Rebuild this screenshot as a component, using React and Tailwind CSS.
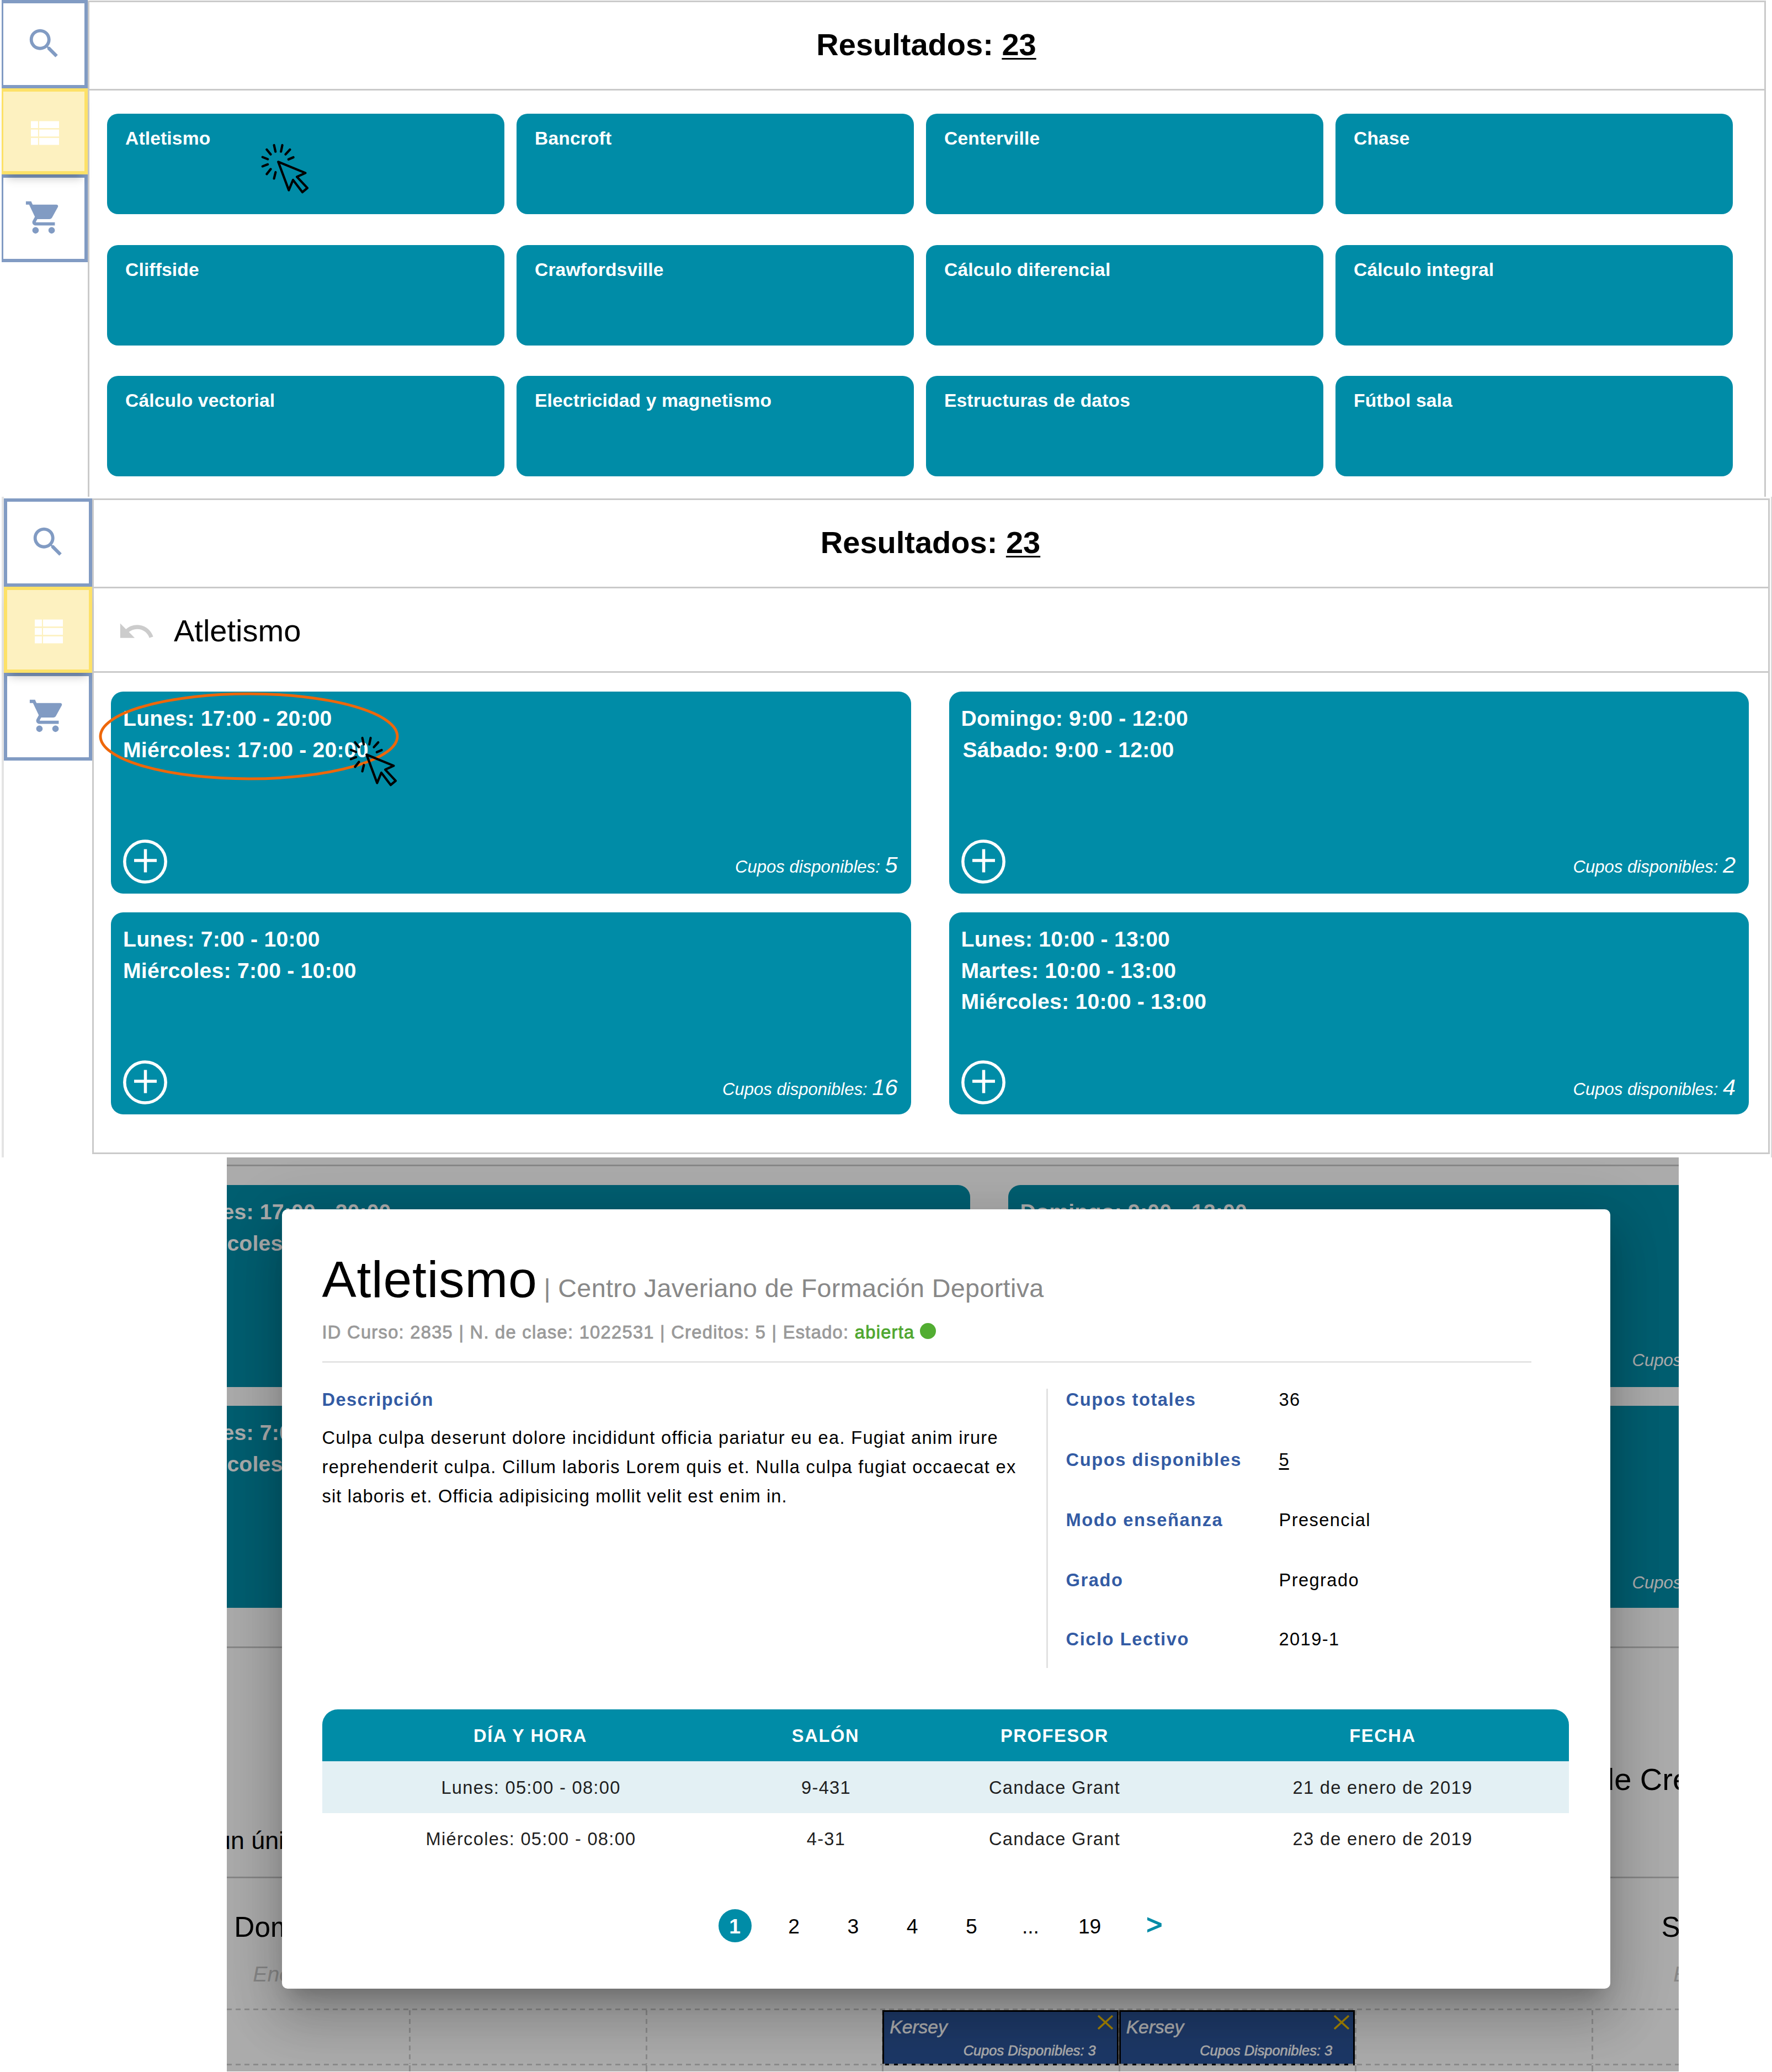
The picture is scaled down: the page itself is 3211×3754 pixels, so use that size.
import React from "react";

const subjects = [
  "Atletismo",
  "Bancroft",
  "Centerville",
  "Chase",
  "Cliffside",
  "Crawfordsville",
  "Cálculo diferencial",
  "Cálculo integral",
  "Cálculo vectorial",
  "Electricidad y magnetismo",
  "Estructuras de datos",
  "Fútbol sala",
];

const schedules = [
  { lines: ["Lunes: 17:00 - 20:00", "Miércoles: 17:00 - 20:00"], seats: 5 },
  { lines: ["Domingo: 9:00 - 12:00", "Sábado: 9:00 - 12:00"], seats: 2 },
  { lines: ["Lunes: 7:00 - 10:00", "Miércoles: 7:00 - 10:00"], seats: 16 },
  {
    lines: [
      "Lunes: 10:00 - 13:00",
      "Martes: 10:00 - 13:00",
      "Miércoles: 10:00 - 13:00",
    ],
    seats: 4,
  },
];

function Icon({ d, className }) {
  return (
    <svg viewBox="0 0 24 24" className={className} fill="currentColor">
      <path d={d} />
    </svg>
  );
}

const SEARCH =
  "M15.5 14h-.79l-.28-.27C15.41 12.59 16 11.11 16 9.5 16 5.91 13.09 3 9.5 3S3 5.91 3 9.5 5.91 16 9.5 16c1.61 0 3.09-.59 4.23-1.57l.27.28v.79l5 4.99L20.49 19l-4.99-5zm-6 0C7.01 14 5 11.99 5 9.5S7.01 5 9.5 5 14 7.01 14 9.5 11.99 14 9.5 14z";
const LIST =
  "M4 4.8h4.3v4.2H4zM9 4.8h12v4.2H9zM4 9.9h4.3v4.2H4zM9 9.9h12v4.2H9zM4 15h4.3v4.2H4zM9 15h12v4.2H9z";
const CART =
  "M7 18c-1.1 0-1.99.9-1.99 2S5.9 22 7 22s2-.9 2-2-.9-2-2-2zM1 2v2h2l3.6 7.59-1.35 2.45c-.16.28-.25.61-.25.96 0 1.1.9 2 2 2h12v-2H7.42c-.14 0-.25-.11-.25-.25l.03-.12.9-1.63h7.45c.75 0 1.41-.41 1.75-1.03l3.58-6.49c.08-.14.12-.31.12-.48 0-.55-.45-1-1-1H5.21l-.94-2H1zm16 16c-1.1 0-1.99.9-1.99 2s.89 2 1.99 2 2-.9 2-2-.9-2-2-2z";
const UNDO =
  "M12.5 8c-2.65 0-5.05.99-6.9 2.6L2 7v9h9l-3.62-3.62c1.39-1.16 3.16-1.88 5.12-1.88 3.54 0 6.55 2.31 7.6 5.5l2.37-.78C21.08 11.03 17.15 8 12.5 8z";

function SideNav({ narrow }) {
  return (
    <nav className={narrow ? "w-[156px] shrink-0" : "w-[160px] shrink-0"}>
      <div
        className={`flex h-[160px] items-center justify-center border-[6px] border-[#819bc3] text-[#819bc3] ${narrow ? "border-l-[3px]" : ""}`}
      >
        <Icon d={SEARCH} className="mb-[3px] size-[70px]" />
      </div>
      <div
        className={`relative z-10 flex h-[156px] items-center justify-center border-[6px] border-[#fde167] bg-[#fdf1c0] text-white shadow-[0_16px_16px_-10px_rgba(0,0,0,0.25)] ${narrow ? "border-l-[3px]" : ""}`}
      >
        <Icon d={LIST} className="mt-[5px] size-[72px]" />
      </div>
      <div
        className={`flex h-[159px] items-center justify-center border-[6px] border-[#819bc3] text-[#819bc3] ${narrow ? "border-l-[3px]" : ""}`}
      >
        <Icon d={CART} className="mb-[3px] mr-[2px] size-[70px]" />
      </div>
    </nav>
  );
}

function ResultsHeader() {
  return (
    <header className="flex h-[160px] items-center justify-center border-b-[3px] border-[#cacaca] pb-[3px] pr-[2px] text-[56px] font-bold leading-[60px] text-black">
      <h1 className="whitespace-pre">
        Resultados:{" "}
        <span className="underline decoration-[3px] underline-offset-[5px]">
          23
        </span>
      </h1>
    </header>
  );
}

function ClickCursor({ className }) {
  return (
    <svg
      viewBox="470 256 94 98"
      className={className}
      fill="none"
      stroke="#000"
      strokeLinecap="round"
      strokeLinejoin="round"
      strokeWidth="4.2"
    >
      <path d="M497.6 263l2.6 11.7M512.6 263l-2.4 11.7M484.4 271l7.1 8.7M526.4 271l-7.9 8.7M476.8 284.6l9.4 3.8M532.6 285l-8.8 3.8M476.8 301.4l9.4-3.6M484.4 315.4l7.1-9M497.6 323.4l2.8-11.4" />
      <path d="M505.2 293.2L554.4 313.4 539 320.4 558 340.6 549 348.2 532 326 524.3 344.6z" />
    </svg>
  );
}

function AddIcon() {
  return (
    <svg
      viewBox="0 0 82 80"
      className="h-[80px] w-[82px]"
      fill="none"
      stroke="#fff"
      strokeWidth="5.5"
    >
      <ellipse cx="40" cy="40" rx="37.2" ry="37" />
      <path d="M40.5 17.5v42M20 38h41" />
    </svg>
  );
}

function ScheduleGrid() {
  return (
    <div className="grid w-[2968px] grid-cols-2 gap-x-[69px] gap-y-[34px] text-white">
      {schedules.map((s, i) => (
        <article
          key={i}
          className="flex h-[366px] flex-col justify-between rounded-[22px] bg-[#008ca7] pb-[18px] pl-[22px] pr-[24px] pt-[21px]"
        >
          <div className="text-[39.2px] font-bold leading-[56.5px] tracking-[0.2px]">
            {s.lines.map((l) => (
              <p key={l} className={l.startsWith("Sábado") ? "pl-[3px]" : ""}>
                {l}
              </p>
            ))}
          </div>
          <div className="flex items-end justify-between">
            <AddIcon />
            <p
              className={`text-[41.5px] italic leading-[56px] ${i < 2 ? "mb-[6px]" : "mb-[3px]"}`}
            >
              <span className="text-[31.1px] leading-none">
                Cupos disponibles:{" "}
              </span>
              {s.seats}
            </p>
          </div>
        </article>
      ))}
    </div>
  );
}

function SubjectsPanel() {
  return (
    <section className="flex h-[900px] overflow-hidden pl-[3px]">
      <SideNav narrow />
      <div className="mt-px w-[3041px] border-x-[3px] border-t-[3px] border-[#cacaca]">
        <ResultsHeader />
        <div className="mt-[42px] grid grid-cols-4 gap-x-[22px] gap-y-[55.5px] pl-[32px] pr-[57px]">
          {subjects.map((name, i) => (
            <div
              key={name}
              className="relative h-[182px] rounded-[20px] bg-[#008ca7] pl-[33px] pt-[25px] text-[33.6px] font-bold leading-[40px] tracking-[0.15px] text-white"
            >
              {name}
              {i === 0 && (
                <ClickCursor className="absolute left-[275px] top-[50px] h-[98px] w-[94px]" />
              )}
            </div>
          ))}
        </div>
      </div>
    </section>
  );
}

function SchedulePanel() {
  return (
    <section className="relative flex h-[1197px] pt-[3px]">
      <div className="-mt-[3px] w-[7px] shrink-0 border-r-[4px] border-[#e4e4e4]" />
      <SideNav />
      <div className="h-[1188px] w-[3040px] shrink-0 border-[3px] border-[#cacaca]">
        <ResultsHeader />
        <div className="flex h-[153px] items-center gap-[33px] border-b-[3px] border-[#cacaca] pl-[42px] pt-[3px] text-[56px] leading-[60px]">
          <Icon d={UNDO} className="mt-[2px] size-[70px] text-[#cccccc]" />
          <h2>Atletismo</h2>
        </div>
        <div className="pl-[31px] pt-[34px]">
          <ScheduleGrid />
        </div>
      </div>
      <div className="-mt-[3px] ml-[2px] w-[2px] shrink-0 bg-[#dcdcdc]" />
      <svg
        viewBox="0 0 548 164"
        className="absolute left-[177px] top-[352px] h-[164px] w-[548px]"
        fill="none"
        stroke="#ee670a"
        strokeWidth="5"
      >
        <ellipse cx="274" cy="82" rx="269" ry="77" />
      </svg>
      <ClickCursor className="absolute left-[629px] top-[430px] h-[98px] w-[94px]" />
    </section>
  );
}

function DashedRow() {
  return (
    <div className="h-[3px] shrink-0 bg-[repeating-linear-gradient(90deg,#cfcfcf_0_9px,transparent_9px_16px)]" />
  );
}

function CalendarEvent() {
  return (
    <div className="-mb-[3px] ml-[1px] flex h-[100px] flex-col justify-between border-[3px] border-black bg-[#2c5499] pb-[8px] pl-[10px] pr-[7px] pt-[6px] italic text-white">
      <div className="flex justify-between">
        <span className="pt-[2px] text-[33.6px] leading-[40px] [-webkit-text-stroke:0.5px]">
          Kersey
        </span>
        <svg
          viewBox="0 0 28 26"
          className="h-[26px] w-[28px]"
          stroke="#f5c400"
          strokeWidth="3.5"
        >
          <path d="M1 1l26 24M27 1L1 25" />
        </svg>
      </div>
      <span className="-mt-[2px] mb-[2px] pr-[31px] text-right text-[25.4px] leading-[28px] [-webkit-text-stroke:0.6px]">
        Cupos Disponibles: 3
      </span>
    </div>
  );
}

function CalendarBackdrop() {
  return (
    <div className="flex h-full w-full flex-col bg-white">
      <div className="h-[16px] shrink-0 border-b-[3px] border-[#cacaca]" />
      <div className="-ml-[103px] mt-[34px] h-[836px] shrink-0">
        <ScheduleGrid />
      </div>
      <div className="flex h-[420px] shrink-0 border-y-[3px] border-[#cacaca] text-black">
        <p className="-ml-[18px] w-[2501px] shrink-0 whitespace-nowrap pt-[318px] text-[44.8px] leading-[60px]">
          un único
        </p>
        <p className="whitespace-nowrap pt-[208px] text-[56px] leading-[60px]">
          de Creditos
        </p>
      </div>
      <div className="-ml-[98px] flex h-[236px] w-[2999px] shrink-0 justify-between pt-[59px] text-center">
        <div className="w-[428px]">
          <p className="text-[51.3px] leading-[60px]">Domingo</p>
          <p className="mt-[30px] text-[39.2px] italic leading-[50px] text-[#c8c8c8]">
            Enero 6
          </p>
        </div>
        <div className="w-[428px]">
          <p className="pl-[2px] text-[51.3px] leading-[60px]">Sábado</p>
          <p className="mt-[30px] pl-[6px] text-[39.2px] italic leading-[50px] text-[#c8c8c8]">
            Enero 5
          </p>
        </div>
      </div>
      <DashedRow />
      <div className="-ml-[98px] grid h-[97px] w-[2999px] shrink-0 grid-cols-7">
        {[0, 1, 2, 3, 4, 5, 6].map((c) => (
          <div
            key={c}
            className="flex bg-[repeating-linear-gradient(180deg,#cfcfcf_0_9px,transparent_9px_16px)] bg-[length:3px_100%] bg-no-repeat"
          >
            {(c === 3 || c === 4) && (
              <div className="w-full">
                <CalendarEvent />
              </div>
            )}
          </div>
        ))}
      </div>
      <DashedRow />
      <div className="-ml-[98px] grid w-[2999px] grow grid-cols-7">
        {[0, 1, 2, 3, 4, 5, 6].map((c) => (
          <div key={c} className="border-l-[3px] border-[#cfcfcf]" />
        ))}
      </div>
    </div>
  );
}

const facts = [
  ["Cupos totales", "36"],
  ["Cupos disponibles", "5"],
  ["Modo enseñanza", "Presencial"],
  ["Grado", "Pregrado"],
  ["Ciclo Lectivo", "2019-1"],
];

const rows = [
  ["Lunes: 05:00 - 08:00", "9-431", "Candace Grant", "21 de enero de 2019"],
  ["Miércoles: 05:00 - 08:00", "4-31", "Candace Grant", "23 de enero de 2019"],
];

function CourseDialog() {
  return (
    <div className="h-[1412px] w-[2407px] rounded-[10px] bg-white pl-[72.5px] pt-[76.5px] text-[32.67px] leading-[40px] tracking-[1.28px] shadow-[0_26px_35px_-16px_rgba(0,0,0,0.2),0_56px_89px_7px_rgba(0,0,0,0.14),0_21px_107px_19px_rgba(0,0,0,0.12)]">
      <h2 className="whitespace-nowrap text-[93.3px] leading-[100px] tracking-[0.7px] text-black">
        Atletismo
        <span className="pl-[12px] text-[46.7px] leading-none tracking-[0.35px] text-[#888888]">
          | Centro Javeriano de Formación Deportiva
        </span>
      </h2>
      <p className="mt-[26px] flex items-center whitespace-pre text-[#9a9a9a] [-webkit-text-stroke:0.9px]">
        ID Curso: 2835 | N. de clase: 1022531 | Creditos: 5 | Estado:{" "}
        <span className="text-[#4fa72f]">abierta</span>
        <span className="mb-[5px] ml-[9px] size-[29px] rounded-full bg-[#52ad32]" />
      </p>
      <div className="mt-[32px] h-[3px] w-[2191px] bg-[#e4e4e4]" />
      <div className="mt-[47px] flex h-[506px]">
        <div className="w-[1312px] shrink-0">
          <h3 className="font-bold tracking-[1.4px] text-[#335ba4]">
            Descripción
          </h3>
          <p className="mt-[22px] whitespace-nowrap leading-[53px] text-black">
            Culpa culpa deserunt dolore incididunt officia pariatur eu ea.
            Fugiat anim irure
            <br />
            reprehenderit culpa. Cillum laboris Lorem quis et. Nulla culpa
            fugiat occaecat ex
            <br />
            <span className="tracking-[1.13px]">
              sit laboris et. Officia adipisicing mollit velit est enim in.
            </span>
          </p>
        </div>
        <dl className="flex flex-col gap-[69px] border-l-[3px] border-[#e2e2e2] pl-[33px]">
          {facts.map(([k, v]) => (
            <div key={k} className="flex last:-mt-[2px]">
              <dt className="w-[386px] font-bold tracking-[1.55px] text-[#335ba4]">
                {k}
              </dt>
              <dd
                className={
                  v === "5"
                    ? "tracking-normal text-black underline decoration-[3px] underline-offset-[4px]"
                    : "tracking-[1.4px] text-black"
                }
              >
                {v}
              </dd>
            </div>
          ))}
        </dl>
      </div>
      <div className="mt-[75.5px] w-[2259px] overflow-hidden rounded-t-[28px] text-center">
        <div className="grid h-[94px] grid-cols-[755px_315px_515px_674px] items-center bg-[#008ca7] pt-[2px] font-bold tracking-[1.6px] text-white">
          <span>DÍA Y HORA</span>
          <span>SALÓN</span>
          <span>PROFESOR</span>
          <span>FECHA</span>
        </div>
        {rows.map((r, i) => (
          <div
            key={i}
            className={`grid h-[93.5px] grid-cols-[757px_313px_515px_674px] items-center pt-[2px] text-[#1f1f1f] ${i === 0 ? "bg-[#e3f0f4]" : ""}`}
          >
            {r.map((c) => (
              <span key={c}>{c}</span>
            ))}
          </div>
        ))}
      </div>
      <div className="ml-[718px] mt-[80px] flex items-center gap-[47.2px] text-center text-[37.3px] leading-[60px] tracking-normal text-black">
        <span className="h-[60px] w-[60px] rounded-full bg-[#008ca7] pt-px font-bold text-white">
          1
        </span>
        {["2", "3", "4", "5", "...", "19"].map((p) => (
          <span key={p} className="w-[60px] pt-[2px]">
            {p}
          </span>
        ))}
        <span className="mb-[4px] ml-[10px] w-[60px] text-[50px] leading-[50px] text-[#008ca7] [-webkit-text-stroke:1.5px]">
          &gt;
        </span>
      </div>
    </div>
  );
}

export default function App() {
  return (
    <main className="h-[3754px] w-[3211px] overflow-hidden bg-white font-['Liberation_Sans',Arial,sans-serif] text-black">
      <SubjectsPanel />
      <SchedulePanel />
      <section className="relative ml-[411px] h-[1656px] w-[2631px] overflow-hidden">
        <CalendarBackdrop />
        <div className="absolute inset-0 bg-black/33 pl-[100px] pt-[94px]">
          <CourseDialog />
        </div>
      </section>
    </main>
  );
}
